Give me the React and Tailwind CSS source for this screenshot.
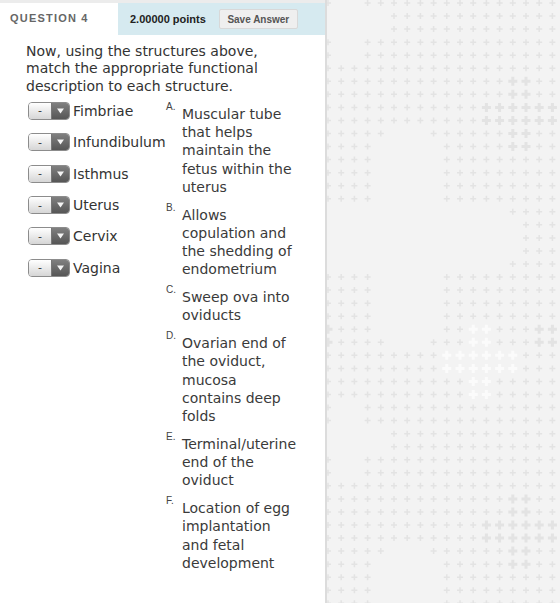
import React from 'react';

const structures = ['Fimbriae', 'Infundibulum', 'Isthmus', 'Uterus', 'Cervix', 'Vagina'];

const answers = [
  ['A.', 'Muscular tube that helps maintain the fetus within the uterus'],
  ['B.', 'Allows copulation and the shedding of endometrium'],
  ['C.', 'Sweep ova into oviducts'],
  ['D.', 'Ovarian end of the oviduct, mucosa contains deep folds'],
  ['E.', 'Terminal/uterine end of the oviduct'],
  ['F.', 'Location of egg implantation and fetal development'],
];

// one tile of the backdrop: '.' empty, '+' dot, 'B' big dot, 'W' light dot
const FULL = '+..+++++++++++++++';
const GAP = '++++.....+++++++++';
const tile = [
  FULL,
  '.....+++++++++++++',
  '.....+++++++++++++',
  FULL,
  FULL,
  '++++++++++++++++++',
  '++++++++++++++BB++',
  '++++++++++++++BB++',
  '++++++++++++BBBBBB',
  '++++++++++++BBBBBB',
  '+++++...++++++BB++',
  '++++.....+++++BB++',
  GAP,
  GAP,
  GAP,
  GAP,
  '..............++++',
  '...............+++',
  '...............+++',
  '...............+++',
  '..............++++',
  GAP,
  GAP,
  GAP,
  GAP,
  'B+++.....++WW+++BB',
  'B++++...+++WW+++BB',
  '+++++++++WWWWWW+++',
  '+++++++++WWWWWW+++',
  '+++++++++++WW+++++',
  '+++++++++++WW+++++',
  FULL,
];

function Backdrop() {
  const marks = [];
  for (let r = 0; r < 47; r++) {
    const row = tile[r % 32];
    for (let c = 0; c < 18; c++) {
      const k = row[c];
      if (k === '.') continue;
      const x = 1 + c * 13.2;
      const y = 3 + r * 13.05;
      const a = k === '+' ? 3 : 4.5;
      marks.push(
        <path
          key={`${r}-${c}`}
          d={`M${x - a} ${y}H${x + a}M${x} ${y - a}V${y + a}`}
          stroke={k === 'W' ? '#fbfbfb' : '#e3e3e3'}
          strokeWidth={k === '+' ? 1.5 : 3}
        />
      );
    }
  }
  return (
    <svg width="233" height="603" className="block">
      {marks}
    </svg>
  );
}

function Picker() {
  return (
    <div className="flex h-[18px] w-[42px] shrink-0 overflow-hidden rounded-[4px] border border-[#8c8c8c]">
      <div className="flex w-[22px] items-center justify-center bg-linear-to-b from-white to-[#d6d6d6] text-[11px] leading-none text-[#333]">
        -
      </div>
      <div className="flex flex-1 items-center justify-center border-l border-[#777] bg-linear-to-b from-[#808080] to-[#565656]">
        <svg width="7" height="6" viewBox="0 0 7 6">
          <path d="M0 0.5H7L3.5 5.5Z" fill="#f4f4f4" />
        </svg>
      </div>
    </div>
  );
}

export default function App() {
  return (
    <div className="flex h-screen w-[560px] overflow-hidden bg-white font-['DejaVu_Sans',sans-serif]">
      <div className="flex w-[325px] shrink-0 flex-col">
        <div className="h-[3px] bg-[#ececec]" />
        <div className="flex h-[32px]">
          <div className="w-[118px] pl-[10px] pt-[7px] font-['Liberation_Sans',sans-serif] text-[11px] font-bold tracking-[1.2px] text-[#666]">
            QUESTION 4
          </div>
          <div className="flex flex-1 items-center bg-[#d6eaf0] pl-[12px] font-['Liberation_Sans',sans-serif]">
            <span className="text-[11px] font-bold text-[#222]">2.00000 points</span>
            <button className="ml-[13px] h-[20px] w-[79px] rounded-[2px] border border-[#d8d8d8] bg-[#efefef] text-[10px] font-bold text-[#555]">
              Save Answer
            </button>
          </div>
        </div>

        <p className="pl-[26px] pr-[40px] pt-[8px] text-[14px] leading-[17.3px] text-[#333]">
          Now, using the structures above, match the appropriate functional description to each structure.
        </p>

        <div className="mt-[6px] flex">
          <div className="flex w-[166px] shrink-0 flex-col gap-[13.4px] pl-[28px] pt-[1px]">
            {structures.map((s) => (
              <div key={s} className="flex h-[18px] items-center gap-[3px]">
                <Picker />
                <span className="whitespace-nowrap text-[14px] leading-[18px] text-[#333]">{s}</span>
              </div>
            ))}
          </div>

          <div className="flex flex-col gap-[5.5px]">
            {answers.map(([l, t]) => (
              <div key={l} className="flex">
                <span className="mt-[1px] w-[16px] shrink-0 font-['Liberation_Sans',sans-serif] text-[10px] leading-[10px] text-[#444]">
                  {l}
                </span>
                <span className="mt-[4px] w-[116px] text-[14px] leading-[18.25px] text-[#3a3a3a]">{t}</span>
              </div>
            ))}
          </div>
        </div>
      </div>

      <div className="flex-1 border-l-2 border-[#dcdcdc] bg-[#f3f3f3]">
        <Backdrop />
      </div>
    </div>
  );
}
